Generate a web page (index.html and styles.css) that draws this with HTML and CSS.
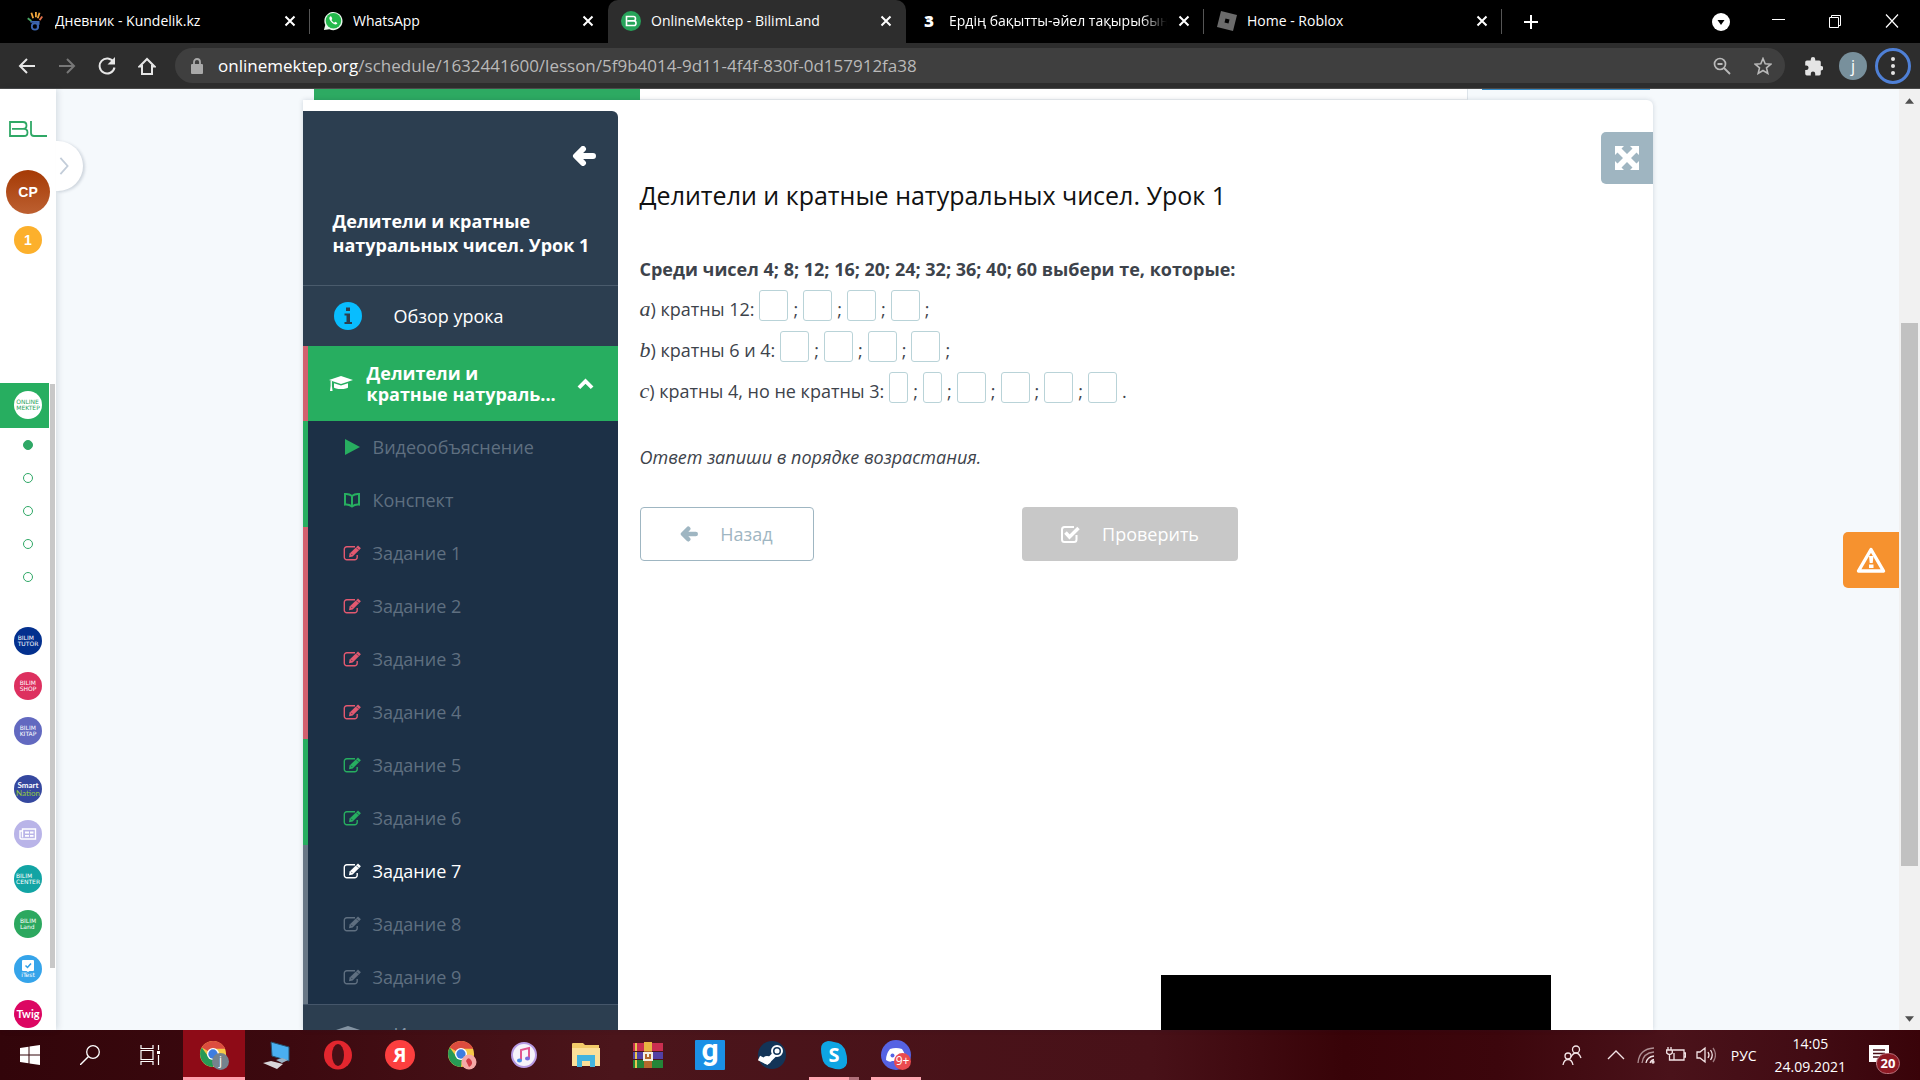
FILE: index.html
```html
<!DOCTYPE html>
<html lang="ru">
<head>
  <meta charset="UTF-8" />
  <meta name="viewport" content="width=device-width, initial-scale=1.0" />
  <title>OnlineMektep - BilimLand</title>
  <link rel="stylesheet" href="styles.css">
</head>
<body>
  <svg class="sprite" aria-hidden="true">
    <symbol id="i-close" viewBox="0 0 14 14"><path d="M2.500 2.500l9 9M11.500 2.500l-9 9" fill="none" stroke="currentColor" stroke-width="2"/></symbol>
    <symbol id="i-edit" viewBox="0 0 18 16"><path d="M12 1.800H3.800A2.500 2.500 0 0 0 1.300 4.300v7.900a2.500 2.500 0 0 0 2.500 2.500h7.900a2.500 2.500 0 0 0 2.500-2.500V10" fill="none" stroke="currentColor" stroke-width="1.400"/><path d="M15 .4l2.900 2.900-8.200 8.200-3.700.7.600-3.800z" fill="currentColor"/><path d="M8 8.700l1.300 1.300M13.300 2.600l2.200 2.200" stroke="#1c3046" stroke-width=".7"/></symbol>
    <symbol id="i-cap" viewBox="0 0 24 18"><path d="M12 1l12 4-12 4L0 5z" fill="currentColor"/><path d="M5 8.200l7 2.400 7-2.400v4c0 2.400-14 2.400-14 0zM1.600 6h1.300v5l.7 5H1l.6-5z" fill="currentColor"/></symbol>
    <symbol id="i-arrow" viewBox="0 0 24 20"><path d="M11 3L4 10l7 7M5 10h16" fill="none" stroke="currentColor" stroke-width="6" stroke-linecap="round" stroke-linejoin="round"/></symbol>
    <symbol id="i-chrome" viewBox="0 0 30 30"><circle cx="15" cy="15" r="14" fill="#f7c948"/><path d="M15 15L3 8A14 14 0 0 1 28 9.500H15z" fill="#dc4c3f"/><path d="M15 29A14 14 0 0 1 3 8l7 10 6 3z" fill="#279a55"/><circle cx="15" cy="15" r="6.500" fill="#fff"/><circle cx="15" cy="15" r="5" fill="#3e7de0"/></symbol>
  </svg>

  <header class="browser">
    <nav class="tabs" aria-label="Вкладки">
      <div class="tab">
        <svg class="favicon" viewBox="0 0 18 22"><path d="M7 8L5 2M10 7V1M12 8l2-6" stroke="#f0a63c" stroke-width="2"/><path d="M14 10l3-4" stroke="#e0704b" stroke-width="2"/><path d="M5 11L1 8" stroke="#4aa564" stroke-width="2"/><path d="M4 12h9v3M12 13v6" fill="none" stroke="#3c66b0" stroke-width="2"/><circle cx="9" cy="17" r="3.500" fill="none" stroke="#3c66b0" stroke-width="2"/></svg>
        <span class="tab-title">Дневник - Kundelik.kz</span>
        <button class="tab-close" aria-label="Закрыть"><svg><use href="#i-close"/></svg></button>
      </div>
      <div class="tab">
        <svg class="favicon" viewBox="0 0 22 22"><path d="M1 21l1.500-5.500A10 10 0 1 1 7 20z" fill="#e9f7ec"/><circle cx="11.500" cy="10.800" r="8.500" fill="#24b94c"/><path d="M8 6c-1.500 1-1.500 3 1 5.700s5 4 6.500 2.300c.6-.8.300-1.200-2-2.300l-1.200 1.100c-1.300-.5-2.400-1.600-3-2.900l.9-1.200C9.500 7 9.200 5.500 8 6z" fill="#fff"/></svg>
        <span class="tab-title">WhatsApp</span>
        <button class="tab-close" aria-label="Закрыть"><svg><use href="#i-close"/></svg></button>
      </div>
      <div class="tab tab-active">
        <svg class="favicon" viewBox="0 0 20 20"><circle cx="10" cy="10" r="10" fill="#27a35a"/><path d="M5.500 5.500h7q2 0 2 2.200t-2 2.200h-6h6.500q2 0 2 2.300t-2 2.300H5.500z" fill="none" stroke="#fff" stroke-width="1.600"/></svg>
        <span class="tab-title">OnlineMektep - BilimLand</span>
        <button class="tab-close" aria-label="Закрыть"><svg><use href="#i-close"/></svg></button>
      </div>
      <div class="tab">
        <span class="favicon favicon-text">З</span>
        <span class="tab-title tab-fade">Ердің бақытты-әйел тақырыбында</span>
        <button class="tab-close" aria-label="Закрыть"><svg><use href="#i-close"/></svg></button>
      </div>
      <div class="tab">
        <svg class="favicon" viewBox="0 0 20 20"><path d="M4 0l16 4-4 16L0 16z" fill="#6b6b6b"/><path d="M8.500 7.500l4 1-1 4-4-1z" fill="#000"/></svg>
        <span class="tab-title">Home - Roblox</span>
        <button class="tab-close" aria-label="Закрыть"><svg><use href="#i-close"/></svg></button>
      </div>
      <button class="new-tab" aria-label="Новая вкладка"><svg viewBox="0 0 16 16"><path d="M8 1v14M1 8h14" stroke="#fff" stroke-width="2"/></svg></button>
      <div class="window-buttons">
        <button aria-label="Поиск вкладок"><svg viewBox="0 0 18 18"><circle cx="9" cy="9" r="9" fill="#fff"/><path d="M5.500 7h7L9 12z" fill="#000"/></svg></button>
        <button aria-label="Свернуть"><svg viewBox="0 0 18 18"><path d="M3 6.500h13" stroke="#fff"/></svg></button>
        <button aria-label="Развернуть"><svg viewBox="0 0 18 18"><path d="M3.500 4.500h9v10h-9zM5.500 4V2.500h9v10H13" fill="none" stroke="#fff"/></svg></button>
        <button aria-label="Закрыть окно"><svg viewBox="0 0 18 18"><path d="M3 1.500l12 13M15 1.500l-12 13" stroke="#fff" stroke-width="1.200"/></svg></button>
      </div>
    </nav>

    <div class="toolbar">
      <div class="nav-buttons">
        <button aria-label="Назад"><svg viewBox="0 0 18 18"><path d="M17 9H2M9 2L2 9l7 7" fill="none" stroke="currentColor" stroke-width="2"/></svg></button>
        <button class="dim" aria-label="Вперёд"><svg viewBox="0 0 18 18"><path d="M1 9h15M9 2l7 7-7 7" fill="none" stroke="currentColor" stroke-width="2"/></svg></button>
        <button aria-label="Обновить"><svg viewBox="0 0 18 18"><path d="M15.500 5A7.500 7.500 0 1 0 16.500 10.500" fill="none" stroke="currentColor" stroke-width="2"/><path d="M17 0v7.500H9.500z" fill="currentColor"/></svg></button>
        <button aria-label="Домой"><svg viewBox="0 0 18 18"><path d="M4 8v9h10V8M1.500 9.500L9 2l7.500 7.500z" fill="none" stroke="currentColor" stroke-width="2"/><path d="M5 8h8v3H5z" fill="#2d2d2d"/></svg></button>
      </div>
      <div class="omnibox">
        <svg class="lock" viewBox="0 0 12 16"><rect y="6" width="12" height="10" rx="1" fill="#a9a9a9"/><path d="M3 6V4a3 3 0 0 1 6 0v2" fill="none" stroke="#a9a9a9" stroke-width="1.800"/></svg>
        <p class="url"><span>onlinemektep.org</span>/schedule/1632441600/lesson/5f9b4014-9d11-4f4f-830f-0d157912fa38</p>
        <button aria-label="Масштаб"><svg viewBox="0 0 18 18"><circle cx="7" cy="7" r="5.500" fill="none" stroke="currentColor" stroke-width="1.700"/><path d="M11 11l6 6M4.500 7h5" stroke="currentColor" stroke-width="1.800"/></svg></button>
        <button aria-label="Добавить в закладки"><svg viewBox="0 0 18 18"><path d="M9 1.500l2.200 5.200 5.600.5-4.300 3.700 1.300 5.500L9 13.500l-4.800 2.900 1.300-5.500L1.200 7.200l5.600-.5z" fill="none" stroke="currentColor" stroke-width="1.600"/></svg></button>
      </div>
      <button class="ext" aria-label="Расширения"><svg viewBox="0 0 18 18"><path d="M7 3a2 2 0 0 1 4 0v1h3.500q1.500 0 1.500 1.500V9h.3a2 2 0 0 1 0 4H16v3q0 1.500-1.500 1.500H11V16a2 2 0 0 0-4 0v1.500H3.500Q2 17.500 2 16v-3.500h1a2 2 0 0 0 0-4H2v-3Q2 4 3.500 4H7z" fill="#e4e4e4"/></svg></button>
      <button class="profile" aria-label="Профиль">j</button>
      <button class="menu" aria-label="Меню"><svg viewBox="0 0 4 18"><circle cx="2" cy="2" r="2" fill="#e4e4e4"/><circle cx="2" cy="9" r="2" fill="#e4e4e4"/><circle cx="2" cy="16" r="2" fill="#e4e4e4"/></svg></button>
    </div>
  </header>

  <div class="page">
    <aside class="rail">
      <svg class="logo" viewBox="0 0 38 16"><path d="M1 1h13q3.500 0 3.500 3.400T14 7.800H3h12q3.500 0 3.500 3.600T15 15H1zM22 0v12q0 3 3 3h13" fill="none" stroke="#2fa866" stroke-width="1.800"/></svg>
      <span class="avatar">CP</span>
      <span class="coin">1</span>
      <a class="app-current" href="#"><span class="app white">ONLINE<br>MEKTEP</span></a>
      <ul class="dots">
        <li class="on"></li>
        <li></li>
        <li></li>
        <li></li>
        <li></li>
      </ul>
      <div class="apps">
        <a class="app navy" href="#">BILIM<br>TUTOR</a>
        <a class="app pink" href="#">BILIM<br>SHOP</a>
        <a class="app violet" href="#">BILIM<br>KITAP</a>
      </div>
      <div class="apps apps-more">
        <a class="app indigo" href="#">Smart<br><span>Nation</span></a>
        <a class="app lilac" href="#" aria-label="Новости"><svg viewBox="0 0 18 12"><path d="M3.500 1h13v10H2.500Q1 11 1 9.500V3h2.500zM3.500 3v6.500" fill="none" stroke="#fff" stroke-width="1.400"/><path d="M6 3.500h4v2H6zM11 3.500h3.500v2H11zM6 7h4v1.800H6zM11 7h3.500v1.800H11z" fill="#fff"/></svg></a>
        <a class="app teal" href="#">BILIM<br>CENTER</a>
        <a class="app green" href="#">BILIM<br>Land</a>
        <a class="app sky" href="#"><svg viewBox="0 0 12 12"><path d="M1 0h10q1 0 1 1v9q0 1-1 1H7.500L6 12l-1.500-1H1q-1 0-1-1V1q0-1 1-1z" fill="#fff"/><path d="M3.500 5.500l2 2 3.500-4" fill="none" stroke="#2f9fe6" stroke-width="1.500"/></svg>iTest</a>
        <a class="app magenta" href="#">Twig</a>
      </div>
      <div class="rail-thumb"></div>
      <button class="rail-toggle" aria-label="Развернуть меню"><svg viewBox="0 0 10 20"><path d="M1 1l8 9-8 9" fill="none" stroke="#c3cdd9" stroke-width="2"/></svg></button>
    </aside>

    <main class="main">
      <div class="wrap">
        <div class="progress">
          <div class="progress-done"></div>
          <div class="progress-rest"></div>
          <div class="progress-link"></div>
        </div>
        <div class="card">
          <aside class="lesson">
            <div class="lesson-head">
              <button aria-label="Свернуть"><svg><use href="#i-arrow"/></svg></button>
              <h2>Делители и кратные натуральных чисел. Урок 1</h2>
            </div>
            <a class="overview" href="#">
              <svg viewBox="0 0 28 28"><circle cx="14" cy="14" r="14" fill="#08bdff"/><path d="M12 5.500h4v3.500h-4zM10.500 11.500H16v8.500h2v2h-7.500v-2h2v-6.500h-2z" fill="#2c3e50"/></svg>
              Обзор урока
            </a>
            <a class="topic" href="#">
              <svg class="cap"><use href="#i-cap"/></svg>
              <span>Делители и<br>кратные натураль...</span>
              <svg class="chevron" viewBox="0 0 18 12"><path d="M2 10l7-7 7 7" fill="none" stroke="#fff" stroke-width="4"/></svg>
            </a>
            <ul class="steps">
              <li class="good"><a href="#"><svg viewBox="0 0 18 16"><path d="M2 0l15 8-15 8z" fill="currentColor"/></svg>Видеообъяснение</a></li>
              <li class="good"><a href="#"><svg viewBox="0 0 18 16"><path d="M9 4Q6 1.500 2 2v10.500q4-.5 7 2 3-2.500 7-2V2Q12 1.500 9 4zv10" fill="none" stroke="currentColor" stroke-width="2"/></svg>Конспект</a></li>
              <li class="bad"><a href="#"><svg><use href="#i-edit"/></svg>Задание 1</a></li>
              <li class="bad"><a href="#"><svg><use href="#i-edit"/></svg>Задание 2</a></li>
              <li class="bad"><a href="#"><svg><use href="#i-edit"/></svg>Задание 3</a></li>
              <li class="bad"><a href="#"><svg><use href="#i-edit"/></svg>Задание 4</a></li>
              <li class="good"><a href="#"><svg><use href="#i-edit"/></svg>Задание 5</a></li>
              <li class="good"><a href="#"><svg><use href="#i-edit"/></svg>Задание 6</a></li>
              <li class="current"><a href="#"><svg><use href="#i-edit"/></svg>Задание 7</a></li>
              <li><a href="#"><svg><use href="#i-edit"/></svg>Задание 8</a></li>
              <li><a href="#"><svg><use href="#i-edit"/></svg>Задание 9</a></li>
            </ul>
            <a class="next-topic" href="#"><svg><use href="#i-cap"/></svg>И</a>
          </aside>

          <section class="task">
            <h1>Делители и кратные натуральных чисел. Урок 1</h1>
            <form class="answers">
              <p class="question">Среди чисел 4; 8; 12; 16; 20; 24; 32; 36; 40; 60 выбери те, которые:</p>
              <div class="row">
                <span><i>a</i>) кратны 12:</span>
                <input type="text" aria-label="a 1"><span>;</span>
                <input type="text" aria-label="a 2"><span>;</span>
                <input type="text" aria-label="a 3"><span>;</span>
                <input type="text" aria-label="a 4"><span>;</span>
              </div>
              <div class="row">
                <span><i>b</i>) кратны 6 и 4:</span>
                <input type="text" aria-label="b 1"><span>;</span>
                <input type="text" aria-label="b 2"><span>;</span>
                <input type="text" aria-label="b 3"><span>;</span>
                <input type="text" aria-label="b 4"><span>;</span>
              </div>
              <div class="row">
                <span><i>c</i>) кратны 4, но не кратны 3:</span>
                <input class="short" type="text" aria-label="c 1"><span>;</span>
                <input class="short" type="text" aria-label="c 2"><span>;</span>
                <input type="text" aria-label="c 3"><span>;</span>
                <input type="text" aria-label="c 4"><span>;</span>
                <input type="text" aria-label="c 5"><span>;</span>
                <input type="text" aria-label="c 6"><span>.</span>
              </div>
              <p class="hint">Ответ запиши в порядке возрастания.</p>
              <div class="actions">
                <button class="btn btn-back" type="button"><svg><use href="#i-arrow"/></svg>Назад</button>
                <button class="btn btn-check" type="button"><svg viewBox="0 0 20 20"><path d="M16.500 11v4.500q0 2.500-2.500 2.500H4.500Q2 18 2 15.500v-10Q2 3 4.500 3H14" fill="none" stroke="#fff" stroke-width="2"/><path d="M5.500 8.500l4 4.500 9-9" fill="none" stroke="#fff" stroke-width="3.500"/></svg>Проверить</button>
              </div>
            </form>
          </section>

          <button class="fullscreen" aria-label="Во весь экран"><svg viewBox="0 0 24 24"><path d="M0 0h9L6.500 2.500 12 8l5.500-5.500L15 0h9v9l-2.500-2.500L16 12l5.500 5.500L24 15v9h-9l2.500-2.500L12 16l-5.500 5.500L9 24H0v-9l2.500 2.500L8 12 2.500 6.500 0 9z" fill="#fff"/></svg></button>
          <div class="overlay"></div>
        </div>
      </div>
      <button class="report" aria-label="Сообщить об ошибке"><svg viewBox="0 0 30 26"><path d="M15 2.500L27.500 24h-25z" fill="none" stroke="#fff" stroke-width="3.400" stroke-linejoin="round"/><path d="M13 9h4.500l-.8 7h-3zM13 17.500h4.500v3.500H13z" fill="#fff"/></svg></button>
    </main>

    <div class="scrollbar">
      <svg viewBox="0 0 10 6"><path d="M5 0l5 6H0z" fill="#505050"/></svg>
      <div class="thumb"></div>
      <svg viewBox="0 0 10 6"><path d="M0 0h10L5 6z" fill="#505050"/></svg>
    </div>
  </div>

  <footer class="taskbar">
    <div class="start">
      <button aria-label="Пуск"><svg viewBox="0 0 20 20"><path d="M0 3l8.500-1.200v7.700H0zM9.500 1.600L20 0v9.500H9.500zM0 10.500h8.500v7.700L0 17zM9.500 10.500H20V20L9.500 18.400z" fill="#fff"/></svg></button>
      <button aria-label="Поиск"><svg viewBox="0 0 20 20"><circle cx="13" cy="7" r="6.300" fill="none" stroke="#fff" stroke-width="1.300"/><path d="M8.500 11.500L0 20" stroke="#fff" stroke-width="1.400"/></svg></button>
      <button aria-label="Представление задач"><svg viewBox="0 0 20 20"><path d="M1 0v3.500h12V0M1 20v-3.500h12V20M1 5.500h12v9H1zM18.500 0v5M18.500 10v10" fill="none" stroke="#fff" stroke-width="1.200"/><path d="M17 6h3v3h-3z" fill="#fff"/></svg></button>
    </div>
    <div class="apps-bar">
      <button class="active" aria-label="Chrome"><svg viewBox="0 0 30 30"><use href="#i-chrome" width="28" height="28"/><circle cx="21.500" cy="21.500" r="8.500" fill="#75838d"/><text x="21.500" y="25" class="badge-text">j</text></svg></button>
      <button aria-label="Компьютер"><svg viewBox="0 0 30 30"><path d="M10 2l18 5v14l-17-5z" fill="#4aaef0" stroke="#26516e"/><path d="M15 20l6-2 6 2-6 3z" fill="#9ab1c4"/><path d="M2 23l8-2 12 3-6 5z" fill="#d8d5d9"/></svg></button>
      <button aria-label="Opera"><svg viewBox="0 0 30 30"><ellipse cx="15" cy="15" rx="14" ry="14.500" fill="#e3262e"/><ellipse cx="15" cy="15" rx="6" ry="11" fill="#480f16"/></svg></button>
      <button aria-label="Яндекс"><svg viewBox="0 0 30 30"><circle cx="15" cy="15" r="15" fill="#fc3f3f"/><text x="15" y="22" class="ya-text">Я</text></svg></button>
      <button aria-label="Chrome 2"><svg viewBox="0 0 30 30"><use href="#i-chrome" width="28" height="28"/><circle cx="22" cy="22" r="7.500" fill="#f5a9a7"/><path d="M19 21q2-5 5-1t-2 7zM21 18l5 7" fill="#d33c46"/></svg></button>
      <button aria-label="iTunes"><svg viewBox="0 0 30 30"><circle cx="15" cy="15" r="12" fill="#f6f3fa" stroke="#b79be4" stroke-width="2"/><path d="M12 20v-10l8-2v10" fill="none" stroke="#e1558f" stroke-width="2"/><ellipse cx="10.500" cy="20.500" rx="2.500" ry="2" fill="#4a8ee5"/><ellipse cx="18.500" cy="18.500" rx="2.500" ry="2" fill="#7b6bdc"/></svg></button>
      <button aria-label="Проводник"><svg viewBox="0 0 30 30"><path d="M1 4q0-1 1-1h10l2 2h14v21H1z" fill="#f2cb6a"/><path d="M1 8h28v18H1z" fill="#fbe09a"/><path d="M6 15h18v12h-5v-6h-8v6H6z" fill="#42b4df"/></svg></button>
      <button aria-label="WinRAR"><svg viewBox="0 0 30 30"><path d="M0 3h30v8H0z" fill="#c92e50"/><path d="M0 12h30v7H0z" fill="#5240a5"/><path d="M0 20h30v8H0z" fill="#248538"/><path d="M2 3h2v8H2zM2 12h2v7H2zM2 20h2v8H2z" fill="#e8c650"/><path d="M11 2h8v9h-8z" fill="#e6b441"/><path d="M11 11h8v17h-8z" fill="#b3682c"/><path d="M11 13h8v7h-8zM15 13v4" fill="none" stroke="#f2eee4" stroke-width="2"/></svg></button>
      <button aria-label="g"><svg viewBox="0 0 30 30"><rect width="30" height="30" rx="1" fill="#1b90e6"/><text x="15" y="20" class="g-text">g</text></svg></button>
      <button aria-label="Steam"><svg viewBox="0 0 30 30"><circle cx="15" cy="15" r="14" fill="#133457"/><path d="M2 18l8 4 9-9" stroke="#fff" stroke-width="5" fill="none"/><circle cx="10" cy="20" r="4" fill="#fff"/><circle cx="20" cy="11" r="5" fill="#133457" stroke="#fff" stroke-width="2"/><circle cx="20" cy="11" r="2.500" fill="#fff"/></svg></button>
      <button class="open stacked" aria-label="Skype"><svg viewBox="0 0 30 30"><path d="M9 1q-7 1-7 8 0 4 1 8 1 9 10 11 5 2 9 1 7-2 6-10 0-3-1-6-2-10-12-11-3-1-6-1z" fill="#0ea5e3"/><text x="15" y="22" class="skype-text">S</text></svg></button>
      <button class="open" aria-label="Discord"><svg viewBox="0 0 30 30"><circle cx="15" cy="15" r="15" fill="#5663e3"/><path d="M9 9q6-2 12 0 4 6 4 11-4 3-6 1h-8q-2 2-6-1 0-6 4-11z" fill="#fff"/><circle cx="11.500" cy="15.500" r="2" fill="#5663e3"/><circle cx="21.500" cy="21.500" r="8.500" fill="#ea4b50"/><text x="21.500" y="25" class="badge-text">9+</text></svg></button>
    </div>
    <div class="tray">
      <svg class="people" viewBox="0 0 20 20"><circle cx="14" cy="4.500" r="3.500"/><path d="M9 12q2-4 5-4t5 5"/><circle cx="6" cy="11" r="3"/><path d="M1 20q1-5.500 5-5.500t5 5.500"/></svg>
      <svg viewBox="0 0 20 20"><path d="M2 14l8-8 8 8"/></svg>
      <svg viewBox="0 0 20 20"><g opacity=".6"><path d="M2 18Q3 4 18 3M6 18Q7 8 18 7"/></g><path d="M10 18q1-6 8-7M14 18q1-3 4-3.500"/><circle cx="17" cy="17" r="1"/></svg>
      <svg viewBox="0 0 20 20"><path d="M7 5h11v10H5M18 8h1.500v4H18M.7 5h5.600v3q-2.800 3-5.600 0zM2 2v3M5 2v3M3.500 10v5H8V8"/></svg>
      <svg viewBox="0 0 20 20"><path d="M1 7h3l5-4v14l-5-4H1zM12 7q2 3 0 6M14.500 5q3.500 5 0 10"/><path opacity=".5" d="M17 3q5 7 0 14"/></svg>
      <span class="lang">РУС</span>
      <time class="clock">14:05<br>24.09.2021</time>
      <button class="notify" aria-label="Уведомления"><svg viewBox="0 0 20 20"><path d="M0 0h20v17h-9l-4 3v-3H0z" fill="#fff" stroke="none"/><path d="M4 5h12M4 8.500h12M4 12h8" stroke="#4a1018"/></svg><span>20</span></button>
    </div>
  </footer>
</body>
</html>
```
FILE: styles.css
```css
* {
  box-sizing: border-box;
}

body {
  margin: 0;
  height: 100vh;
  display: flex;
  flex-direction: column;
  overflow: hidden;
  font-family: 'Open Sans', 'Noto Sans', sans-serif;
  color: #3d434b;
  background: #f5f9fc;
}

h1, h2, p, ul {
  margin: 0;
  padding: 0;
}

ul {
  list-style: none;
}

a {
  color: inherit;
  text-decoration: none;
}

button {
  display: flex;
  align-items: center;
  justify-content: center;
  padding: 0;
  border: none;
  background: none;
  color: inherit;
  font-family: inherit;
  cursor: pointer;
}

svg {
  flex: none;
}

.sprite {
  position: absolute;
  width: 0;
  height: 0;
}

/* browser */
.browser {
  color: #fff;
  background: #000;
}

.tabs {
  height: 43px;
  display: flex;
  align-items: center;
  padding-left: 12px;
}

.tab {
  flex: 0 1 298px;
  min-width: 0;
  height: 43px;
  display: flex;
  align-items: center;
  gap: 10px;
  padding: 0 13px 2px;
  font-size: 14px;
}

.tab-active {
  background: #2d2d2d;
  border-radius: 10px 10px 0 0;
}

.tab:first-child,
.tab:nth-child(4),
.tab:nth-child(5) {
  background: linear-gradient(#555, #555) right center / 1px 25px no-repeat;
}

.favicon {
  flex: none;
  width: 20px;
  height: 20px;
}

.favicon-text {
  font-weight: 800;
  font-size: 15px;
  line-height: 20px;
  text-align: center;
}

.tab-title {
  flex: 1;
  overflow: hidden;
  white-space: nowrap;
}

.tab-fade {
  mask-image: linear-gradient(90deg, #000 88%, transparent);
}

.tab-close svg {
  width: 14px;
  height: 14px;
}

.new-tab {
  width: 58px;
}

.new-tab svg {
  width: 16px;
  height: 16px;
}

.window-buttons {
  margin-left: auto;
  display: flex;
}

.window-buttons button {
  width: 57px;
}

.window-buttons svg {
  width: 18px;
  height: 18px;
}

.toolbar {
  height: 46px;
  display: flex;
  align-items: center;
  padding: 0 9px 0 7px;
  background: #2d2d2d;
  border-bottom: 1px solid #4a4a4a;
}

.nav-buttons {
  display: flex;
  width: 168px;
  color: #e6e6e6;
}

.nav-buttons button {
  width: 40px;
}

.nav-buttons .dim {
  color: #777;
}

.nav-buttons svg,
.omnibox button svg {
  width: 18px;
  height: 18px;
}

.omnibox {
  flex: 1;
  height: 35px;
  display: flex;
  align-items: center;
  padding: 0 12px 0 16px;
  border-radius: 18px;
  background: #3f3f3f;
  color: #b9b9b9;
}

.lock {
  width: 12px;
  height: 16px;
}

.url {
  flex: 1;
  margin-left: 15px;
  font-size: 17px;
  white-space: nowrap;
}

.url span {
  color: #fff;
}

.omnibox button {
  width: 20px;
  margin-left: 21px;
}

.ext svg {
  width: 20px;
  height: 20px;
}

.ext {
  margin-left: 18px;
}

.profile {
  width: 28px;
  height: 28px;
  margin: 0 8px 0 16px;
  border-radius: 50%;
  background: #78909c;
  color: #fff;
  font-size: 16px;
}

.menu {
  width: 36px;
  height: 36px;
  border: 3px solid #4f80d6;
  border-radius: 50%;
}

.menu svg {
  width: 4px;
  height: 18px;
}

/* page */
.page {
  flex: 1;
  min-height: 0;
  display: flex;
}

.rail {
  position: relative;
  z-index: 1;
  flex: none;
  width: 56px;
  display: flex;
  flex-direction: column;
  align-items: center;
  background: #fff;
  box-shadow: 2px 0 6px rgba(0, 30, 60, 0.12);
}

.logo {
  width: 38px;
  height: 16px;
  margin-top: 32px;
}

.avatar {
  width: 44px;
  height: 44px;
  margin-top: 33px;
  border-radius: 50%;
  background: linear-gradient(#a53a05, #bd6031);
  color: #fff;
  font: bold 14px/44px 'Liberation Sans', sans-serif;
  text-align: center;
}

.coin {
  width: 28px;
  height: 28px;
  margin-top: 12px;
  border-radius: 50%;
  background: #fcb02c;
  color: #fff;
  font: bold 14px/28px 'Liberation Sans', sans-serif;
  text-align: center;
}

.app-current {
  align-self: flex-start;
  width: 49px;
  height: 45px;
  margin-top: 129px;
  padding: 8px 0 0 14px;
  background: #27ae60;
}

.app {
  width: 28px;
  height: 28px;
  display: flex;
  flex-direction: column;
  align-items: center;
  justify-content: center;
  border-radius: 50%;
  color: #fff;
  font: 6px/6px 'DejaVu Sans', sans-serif;
}

.white { background: #fff; color: #27a35a; }
.navy { background: #03308e; }
.pink { background: #dd305f; }
.violet { background: #6269c0; }
.indigo { background: #35489f; font-size: 8px; line-height: 8px; font-weight: bold; }
.indigo span { color: #92c83e; font-weight: normal; }
.lilac { background: #b9b4e8; }
.teal { background: #12a4a4; }
.green { background: #2ca85f; }
.sky { background: #35a4ea; }
.magenta { background: #dc0662; font-size: 11px; font-weight: bold; }

.indigo,
.magenta {
  font-family: 'Lato', sans-serif;
}

.lilac svg {
  width: 18px;
  height: 12px;
}

.sky svg {
  width: 12px;
  height: 12px;
}

.dots li {
  height: 33px;
  display: flex;
  align-items: center;
}

.dots li::before {
  content: '';
  width: 8px;
  height: 8px;
  border: 1px solid #2fa866;
  border-radius: 50%;
}

.dots .on::before {
  background: #2fa866;
}

.apps {
  display: flex;
  flex-direction: column;
  gap: 17px;
  margin-top: 34px;
}

.apps-more {
  margin-top: 30px;
}

.rail-thumb {
  position: absolute;
  top: 295px;
  bottom: 62px;
  right: 1px;
  width: 5px;
  background: #c8c8c8;
}

.rail-toggle {
  position: absolute;
  top: 52px;
  left: 56px;
  width: 27px;
  height: 50px;
  padding-right: 12px;
  border-radius: 0 25px 25px 0;
  background: #fff;
  box-shadow: 2px 1px 3px rgba(0, 30, 60, 0.16);
}

.rail-toggle svg {
  width: 10px;
  height: 18px;
}

.main {
  position: relative;
  flex: 1;
  min-width: 0;
}

.wrap {
  max-width: 1350px;
  height: 100%;
  margin: 0 auto;
  display: flex;
  flex-direction: column;
}

.progress {
  height: 11px;
  display: flex;
  padding: 0 3px 0 11px;
}

.progress-done {
  width: 326px;
  background: #2daa62;
}

.progress-rest {
  flex: 1;
  background: #fff;
  border-right: 1px solid #dde4ea;
  border-bottom: 1px solid #eef1f3;
}

.progress-link {
  width: 168px;
  height: 1px;
  margin-left: 14px;
  background: #3388c2;
}

.card {
  position: relative;
  flex: 1;
  min-height: 0;
  display: flex;
  overflow: hidden;
  padding-top: 11px;
  background: #fff;
  border-radius: 0 6px 0 0;
  box-shadow: 0 0 5px rgba(0, 30, 60, 0.16);
}

.lesson {
  flex: none;
  width: 315px;
  overflow: hidden;
  border-radius: 0 6px 0 0;
  background: #2c3e50;
  color: #fff;
  font-size: 18px;
}

.lesson-head {
  height: 175px;
  padding: 35px 22px 0 30px;
  border-bottom: 1px solid #4a5b6c;
}

.lesson-head button {
  margin-left: auto;
}

.lesson-head svg {
  width: 24px;
  height: 20px;
}

.lesson h2 {
  margin-top: 43px;
  font-size: 18px;
  line-height: 24px;
}

.overview {
  height: 60px;
  display: flex;
  align-items: center;
  gap: 32px;
  padding-left: 31px;
}

.overview svg {
  width: 28px;
  height: 28px;
}

.topic {
  height: 75px;
  display: flex;
  align-items: center;
  padding: 0 24px 0 21px;
  border-left: 5px solid #d2606f;
  background: #27ae60;
  font-weight: bold;
  line-height: 21px;
}

.topic span {
  flex: 1;
  margin-left: 14px;
  white-space: nowrap;
}

.cap {
  width: 24px;
  height: 18px;
}

.chevron {
  width: 17px;
  height: 12px;
}

.steps {
  background: #1c3046;
  border-bottom: 1px solid #45566a;
}

.steps li {
  border-left: 5px solid #687786;
}

.steps a {
  height: 53px;
  display: flex;
  align-items: center;
  gap: 12px;
  padding: 0 0 2px 35px;
  color: #5f6f80;
}

.steps svg {
  width: 18px;
  height: 16px;
}

.steps .good {
  border-left-color: #27ae60;
}

.steps .good svg {
  color: #27ae60;
}

.steps .bad {
  border-left-color: #d2606f;
}

.steps .bad svg {
  color: #e25970;
}

.steps .current a {
  color: #fff;
}

.next-topic {
  height: 60px;
  display: flex;
  align-items: center;
  gap: 34px;
  padding: 0 0 2px 33px;
  color: #8392a1;
}

.next-topic svg {
  width: 24px;
  height: 24px;
}

.task {
  flex: 1;
  min-width: 0;
  padding: 64px 22px 0;
  font-size: 18px;
}

.task h1 {
  font-size: 25px;
  line-height: 40px;
  font-weight: normal;
  color: #111;
}

.answers {
  width: 598px;
  margin-top: 42px;
}

.question {
  font-weight: bold;
  line-height: 24px;
}

.row {
  display: flex;
  align-items: center;
  gap: 5px;
  height: 31px;
  margin-top: 10px;
  white-space: nowrap;
}

.row:nth-child(2) {
  margin-top: 9px;
}

.row span {
  padding-top: 6px;
}

.row i {
  font-family: 'Liberation Serif', serif;
  font-size: 22px;
  line-height: 20px;
}

.row input {
  width: 29px;
  height: 31px;
  border: 1px solid #b9d3d8;
  border-radius: 3px;
  background: #fff;
}

.row .short {
  width: 19px;
}

.hint {
  margin-top: 41px;
  line-height: 26px;
  font-style: italic;
}

.actions {
  display: flex;
  justify-content: space-between;
  margin-top: 37px;
}

.btn {
  height: 54px;
  border-radius: 4px;
  gap: 22px;
  font-size: 18px;
}

.btn-back {
  width: 174px;
  border: 1px solid #9fb6c2;
  color: #9fb6c2;
}

.btn-check {
  width: 216px;
  background: #c8c8c8;
  color: #fff;
}

.btn svg {
  width: 18px;
  height: 18px;
}

.btn-check svg {
  width: 20px;
  height: 20px;
}

.fullscreen {
  position: absolute;
  top: 32px;
  right: 0;
  width: 52px;
  height: 52px;
  border-radius: 5px 0 0 5px;
  background: #9fb5c1;
}

.fullscreen svg {
  width: 24px;
  height: 24px;
}

.overlay {
  position: absolute;
  right: 102px;
  bottom: 0;
  width: 390px;
  height: 55px;
  background: #000;
}

.report {
  position: absolute;
  top: 443px;
  right: 0;
  width: 56px;
  height: 56px;
  border-radius: 5px 0 0 5px;
  background: #f6922f;
}

.report svg {
  width: 30px;
  height: 26px;
}

.scrollbar {
  flex: none;
  width: 21px;
  display: flex;
  flex-direction: column;
  align-items: center;
  padding: 9px 0 8px;
  background: #f1f1f1;
}

.scrollbar svg {
  width: 9px;
  height: 6px;
}

.thumb {
  width: 17px;
  height: 543px;
  margin: 219px 0 auto;
  background: #c1c1c1;
}

/* taskbar */
.taskbar {
  flex: none;
  height: 50px;
  display: flex;
  background: linear-gradient(90deg, #32050a, #3c090f 15%, #4b151b 32%, #481118 60%, #380308 70%, #3c060c 78%, #4a121a 87%, #420c14 94%, #390309);
  color: #fff;
}

.start {
  display: flex;
  margin-right: 3px;
}

.start button {
  width: 60px;
}

.start svg {
  width: 20px;
  height: 20px;
}

.apps-bar {
  display: flex;
}

.apps-bar button {
  width: 62px;
}

.apps-bar svg {
  width: 30px;
  height: 30px;
}

.apps-bar .active {
  background: linear-gradient(#ffa0ad, #ffa0ad) bottom / 100% 3px no-repeat, #8e0b17;
}

.apps-bar .open {
  background: linear-gradient(#ffa6b1, #ffa6b1) bottom / 50px 3px no-repeat;
}

.apps-bar .stacked {
  background: linear-gradient(90deg, #ffa6b1 80%, #b0707a 80%) bottom / 50px 3px no-repeat;
}

.apps-bar text {
  fill: #fff;
  text-anchor: middle;
  font-family: 'Open Sans', sans-serif;
}

.badge-text {
  font-size: 12px;
}

.ya-text,
.skype-text {
  font-size: 20px;
  font-weight: bold;
}

.apps-bar .g-text {
  font-family: 'Roboto', sans-serif;
  font-size: 30px;
  font-weight: bold;
}

.tray {
  margin-left: auto;
  display: flex;
  align-items: center;
  gap: 10px;
  padding-right: 31px;
  font-size: 14px;
}

.tray svg {
  width: 20px;
  height: 20px;
  fill: none;
  stroke: #f3e4e6;
  stroke-width: 1.3px;
}

.tray .people {
  margin-right: 14px;
}

.lang {
  margin-left: 5px;
}

.clock {
  margin: 0 13px 0 8px;
  text-align: center;
  line-height: 23px;
}

.notify {
  position: relative;
}

.notify span {
  position: absolute;
  top: 8px;
  left: 7px;
  width: 24px;
  height: 21px;
  border: 1px solid #b8707a;
  border-radius: 11px;
  background: #8e1923;
  font-size: 13px;
  line-height: 19px;
  font-weight: bold;
}
```
